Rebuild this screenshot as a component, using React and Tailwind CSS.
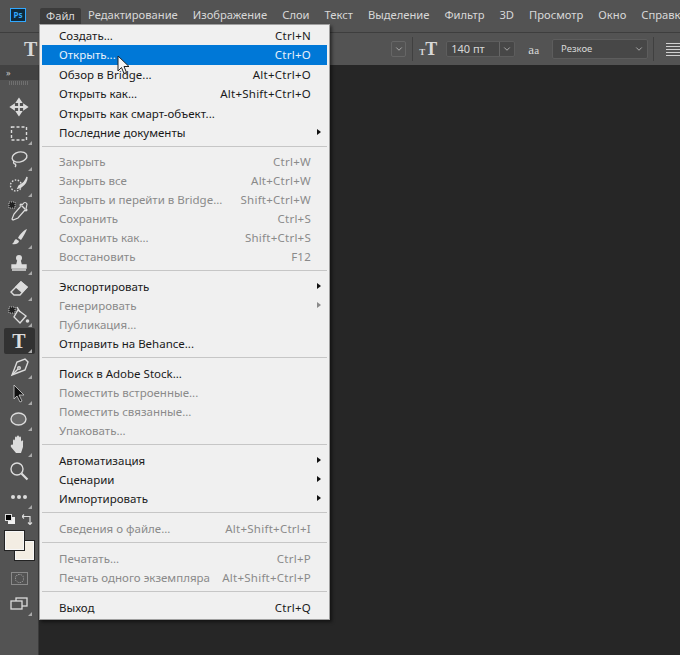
import { ChevronDown } from 'lucide-react'

const font = { fontFamily: '"Noto Sans", sans-serif' }

const topMenu = ['Редактирование', 'Изображение', 'Слои', 'Текст', 'Выделение', 'Фильтр', '3D', 'Просмотр', 'Окно', 'Справка']

// d = disabled, sub = has submenu arrow
const menuGroups = [
  [
    { t: 'Создать...', k: 'Ctrl+N' },
    { t: 'Открыть...', k: 'Ctrl+O', on: true },
    { t: 'Обзор в Bridge...', k: 'Alt+Ctrl+O' },
    { t: 'Открыть как...', k: 'Alt+Shift+Ctrl+O' },
    { t: 'Открыть как смарт-объект...' },
    { t: 'Последние документы', sub: true },
  ],
  [
    { t: 'Закрыть', k: 'Ctrl+W', d: true },
    { t: 'Закрыть все', k: 'Alt+Ctrl+W', d: true },
    { t: 'Закрыть и перейти в Bridge...', k: 'Shift+Ctrl+W', d: true },
    { t: 'Сохранить', k: 'Ctrl+S', d: true },
    { t: 'Сохранить как...', k: 'Shift+Ctrl+S', d: true },
    { t: 'Восстановить', k: 'F12', d: true },
  ],
  [
    { t: 'Экспортировать', sub: true },
    { t: 'Генерировать', sub: true, d: true },
    { t: 'Публикация...', d: true },
    { t: 'Отправить на Behance...' },
  ],
  [
    { t: 'Поиск в Adobe Stock...' },
    { t: 'Поместить встроенные...', d: true },
    { t: 'Поместить связанные...', d: true },
    { t: 'Упаковать...', d: true },
  ],
  [
    { t: 'Автоматизация', sub: true },
    { t: 'Сценарии', sub: true },
    { t: 'Импортировать', sub: true },
  ],
  [{ t: 'Сведения о файле...', k: 'Alt+Shift+Ctrl+I', d: true }],
  [
    { t: 'Печатать...', k: 'Ctrl+P', d: true },
    { t: 'Печать одного экземпляра', k: 'Alt+Shift+Ctrl+P', d: true },
  ],
  [{ t: 'Выход', k: 'Ctrl+Q' }],
]

function MenuRow({ item, tall }) {
  const color = item.on ? 'bg-[#0078d7] text-[#e8f2fb]' : item.d ? 'text-[#8a8a8a]' : 'text-[#1a1a1a]'
  return (
    <div className={`relative flex items-center justify-between ${tall ? 'h-[19.4px]' : 'h-[19px]'} pl-[17px] pr-[16px] text-[11.5px] whitespace-nowrap ${color}`}>
      <span>{item.t}</span>
      {item.k && <span className="tracking-[0.25px]">{item.k}</span>}
      {item.sub && (
        <span className={`absolute right-[6px] top-[6px] w-0 h-0 border-y-[3.5px] border-y-transparent border-l-[4px] ${item.d ? 'border-l-[#8a8a8a]' : 'border-l-[#111]'}`}></span>
      )}
    </div>
  )
}

function FileMenu() {
  return (
    <div className="absolute left-[39px] top-[24px] w-[291px] h-[596px] bg-[#f0f0f0] border border-[#a0a0a0] px-[2px] pt-[1px] shadow-[2px_2px_3px_rgba(0,0,0,0.5)]" style={font}>
      {menuGroups.map((group, i) => (
        <div key={i}>
          {i > 0 && <div className={`h-px bg-[#c6c6c6] mt-[3.7px] ${i === 1 ? 'mb-[5.5px]' : 'mb-[6.2px]'}`}></div>}
          {group.map(item => <MenuRow key={item.t} item={item} tall={i === 0} />)}
        </div>
      ))}
    </div>
  )
}

function Corner() {
  return <span className="absolute right-[3px] bottom-[1px] w-0 h-0 border-l-[4px] border-l-transparent border-b-[4px] border-b-[#aaaaaa]"></span>
}

function Tool({ children, corner = true, active }) {
  return (
    <div className={`relative shrink-0 w-[31px] h-[26px] flex items-center justify-center rounded-[2px] ${active ? 'bg-[#323232]' : ''}`}>
      {children}
      {corner && <Corner />}
    </div>
  )
}

const ic = { width: 22, height: 22, viewBox: '0 0 22 22', fill: 'none', stroke: '#dcdcdc', strokeWidth: 1.4 }

function ToolRail() {
  return (
    <div className="w-[39px] shrink-0 bg-[#535353] border-r border-[#3a3a3a] flex flex-col items-center">
      <div className="w-full h-[15px] bg-[#424242] flex items-center pl-[6px] text-[#c8c8c8] text-[9px] leading-none">»</div>
      <div className="w-[20px] h-[4px] mt-[1px] mb-[9px] bg-[repeating-linear-gradient(90deg,#6f6f6f_0,#6f6f6f_1px,transparent_1px,transparent_2px)]"></div>
      <Tool corner={false}>
        <svg {...ic}><path d="M11 3v16M3 11h16M11 3l-2 3h4zM11 19l-2-3h4zM3 11l3-2v4zM19 11l-3-2v4z" fill="#dcdcdc" strokeWidth="1.8" /></svg>
      </Tool>
      <Tool>
        <svg {...ic}><rect x="3.5" y="5" width="15" height="13" strokeDasharray="3 2" /></svg>
      </Tool>
      <Tool>
        <svg {...ic}><ellipse cx="11.5" cy="9" rx="7.5" ry="5" transform="rotate(-12 11.5 9)" /><path d="M6 13c-1 2 0 3 1 3s1 2 0 3" /></svg>
      </Tool>
      <Tool>
        <svg {...ic}><circle cx="8" cy="11.5" r="5.5" strokeDasharray="1.5 1.5" /><path d="M19 3c-1 4-4 7-8 9l-1 2 3-1c3-2 6-6 6-10z" fill="#dcdcdc" /></svg>
      </Tool>
      <Tool corner={false}>
        <svg {...ic}><rect x="1" y="2" width="6" height="6" fill="#222" strokeWidth="0.8" strokeDasharray="1 1" /><path d="M19 4c-1-2-3-2-4 0l-1 1-1-1-1 1 1 1-7 8-2 5 1 1 5-2 7-8 1 1 1-1-1-1z" strokeWidth="1.2" /><path d="M14 6l3 3" /></svg>
      </Tool>
      <Tool>
        <svg {...ic}><path d="M19 3c-3 1-7 5-9 9l3 2c2-3 5-8 6-11zM8 13c-2 1-2 4-4 5 4 1 7-1 7-3z" fill="#dcdcdc" stroke="none" /></svg>
      </Tool>
      <Tool>
        <svg {...ic}><circle cx="11" cy="6" r="3" fill="#dcdcdc" stroke="none" /><path d="M10 8h2l1 4h-4zM4 13h14v3H4zM4 18h14" fill="#dcdcdc" /></svg>
      </Tool>
      <Tool>
        <svg {...ic}><path d="M13 4l6 5-7 8H6l-3-3z" /><path d="M13 4l6 5-5 5-6-5z" fill="#dcdcdc" /></svg>
      </Tool>
      <Tool>
        <svg {...ic}><rect x="1" y="3" width="6" height="6" fill="#222" strokeWidth="0.8" strokeDasharray="1 1" /><path d="M10 6l8 6-6 7-6-6z" /><path d="M9 3l3 5" /><circle cx="19.5" cy="17" r="1.8" fill="#dcdcdc" stroke="none" /></svg>
      </Tool>
      <Tool active>
        <span className="text-[#dcdcdc] text-[20px] leading-none font-bold" style={{ fontFamily: '"Liberation Serif", serif' }}>T</span>
      </Tool>
      <Tool>
        <svg {...ic}><path d="M17 3l3 3-3 8-8 3-5 2 2-5 3-8z" /><path d="M5 18l5-5" /><circle cx="11" cy="12" r="1.3" /></svg>
      </Tool>
      <Tool>
        <svg {...ic}><path d="M6 3l10 10h-5l3 6-2 1-3-6-3 3z" fill="#111" stroke="#cfcfcf" strokeWidth="0.8" /></svg>
      </Tool>
      <Tool>
        <svg {...ic}><ellipse cx="10.5" cy="11" rx="7.5" ry="6" fill="#6b6b6b" /></svg>
      </Tool>
      <Tool>
        <svg {...ic}><path d="M5 11V7c0-2 2-2 2 0V4c0-2 2-2 2 0V3c0-2 2-2 2 0v1c0-2 2-2 2 0v4c0-2 3-2 2 0v5l-2 6H8l-5-6c-1-2 1-3 2-2z" fill="#dcdcdc" stroke="none" /></svg>
      </Tool>
      <Tool corner={false}>
        <svg {...ic}><circle cx="9" cy="9" r="6" /><path d="M13.5 13.5l6 6" strokeWidth="2.2" /></svg>
      </Tool>
      <Tool>
        <svg {...ic}><circle cx="5" cy="11" r="2" fill="#dcdcdc" stroke="none" /><circle cx="11" cy="11" r="2" fill="#dcdcdc" stroke="none" /><circle cx="17" cy="11" r="2" fill="#dcdcdc" stroke="none" /></svg>
      </Tool>
      <ColorBlock />
      <div className="mt-[12px] shrink-0 w-[17px] h-[13px] border border-[#8a8a8a] flex items-center justify-center">
        <div className="w-[9px] h-[9px] rounded-full border border-dotted border-[#aaaaaa]"></div>
      </div>
      <div className="mt-[6px]">
        <Tool>
          <svg width="18" height="14" viewBox="0 0 18 14" fill="none" stroke="#dcdcdc" strokeWidth="1.3"><rect x="6" y="1" width="11" height="8" /><rect x="1" y="4" width="11" height="8" fill="#535353" /></svg>
        </Tool>
      </div>
    </div>
  )
}

function ColorBlock() {
  return (
    <div className="w-[31px] shrink-0 mt-[1px] flex flex-col">
      <div className="flex items-center justify-between pl-[1px] pr-[2px] h-[16px]">
        <div className="relative w-[10px] h-[10px]">
          <div className="absolute right-0 bottom-0 w-[7px] h-[7px] bg-[#f0f0f0]"></div>
          <div className="absolute left-0 top-0 w-[7px] h-[7px] bg-black border border-[#dddddd]"></div>
        </div>
        <svg width="11" height="11" viewBox="0 0 11 11" fill="none" stroke="#dcdcdc" strokeWidth="1.2"><path d="M0 2.5h8v8M2 .5L0 2.5l2 2M6 8.5l2 2 2-2" /></svg>
      </div>
      <div className="relative h-[29px] mt-[4px]">
        <div className="absolute left-[11px] top-[10px] w-[19px] h-[19px] bg-[#f3ede3] border border-[#f7f7f7] shadow-[0_0_0_1px_#222]"></div>
        <div className="absolute left-[1px] top-0 w-[19px] h-[19px] bg-[#f3ede3] border border-[#f7f7f7] shadow-[0_0_0_1px_#222]"></div>
      </div>
    </div>
  )
}

function OptionsBar() {
  return (
    <div className="h-[33px] bg-[#535353] border-t border-[#3e3e3e] flex items-center text-[#d8d8d8] text-[10px]">
      <span className="ml-[24px] text-[20px] font-bold leading-none" style={{ fontFamily: '"Liberation Serif", serif' }}>T</span>
      <div className="ml-[354px] w-[15px] h-[16px] border border-[#666666] rounded-[2px] flex items-center justify-center">
        <ChevronDown size={10} color="#bdbdbd" />
      </div>
      <div className="ml-[6px] w-px h-[24px] bg-[#404040]"></div>
      <div className="ml-[6px] w-[17px] flex items-baseline" style={{ fontFamily: '"Liberation Serif", serif' }}>
        <span className="text-[9px] leading-none font-bold">T</span>
        <span className="text-[18px] leading-none font-bold">T</span>
      </div>
      <div className="ml-[10px] w-[70px] h-[16px] bg-[#474747] border border-[#5d5d5d] rounded-[2px] flex items-center">
        <span className="pl-[4px] flex-1 text-[11px]">140 пт</span>
        <div className="w-[15px] h-full border-l border-[#666666] flex items-center justify-center">
          <ChevronDown size={10} color="#bdbdbd" />
        </div>
      </div>
      <span className="ml-[13px] text-[13px] leading-none" style={{ fontFamily: '"Liberation Serif", serif' }}>a<span className="text-[11px]">a</span></span>
      <div className="ml-[13px] w-[97px] h-[20px] bg-[#474747] border border-[#5d5d5d] rounded-[2px] flex items-center justify-between pl-[8px] pr-[3px]">
        <span className="text-[9.5px]">Резкое</span>
        <ChevronDown size={10} color="#bdbdbd" />
      </div>
      <div className="ml-[5px] w-px h-[24px] bg-[#404040]"></div>
      <div className="ml-[12px] w-[14px] shrink-0 flex flex-col gap-[2px]">
        <div className="h-px bg-[#d0d0d0]"></div>
        <div className="h-px bg-[#d0d0d0]"></div>
        <div className="h-px bg-[#d0d0d0]"></div>
        <div className="h-px bg-[#d0d0d0]"></div>
        <div className="h-px bg-[#d0d0d0]"></div>
      </div>
    </div>
  )
}

export default function App() {
  return (
    <div className="relative w-[680px] h-[655px] overflow-hidden bg-[#262626] flex flex-col" style={font}>
      {/* MENU BAR */}
      <div className="h-[32px] shrink-0 bg-[#535353] flex items-start pt-[8px] text-[11.2px] text-[#d8d8d8] whitespace-nowrap">
        <div className="shrink-0 ml-[10px] w-[16px] h-[14px] bg-[#0f2a3c] border border-[#31a8ff] text-[#31a8ff] text-[8px] font-bold flex items-center justify-center leading-none">Ps</div>
        <div className="shrink-0 ml-[14px] w-[41px] h-[16px] bg-[#3c3c3c] rounded-t-[2px] flex items-center justify-center">Файл</div>
        <div className="shrink-0 ml-[7px] flex gap-[15px] h-[15px] items-center">
          {topMenu.map(m => <span key={m} className="shrink-0">{m}</span>)}
        </div>
      </div>
      <OptionsBar />
      <div className="flex-1 flex min-h-0">
        <ToolRail />
        <div className="flex-1 bg-[#262626]"></div>
      </div>
      <FileMenu />
      {/* cursor */}
      <svg className="absolute left-[117px] top-[55px]" width="14" height="20" viewBox="0 0 14 20">
        <path d="M1 1v15l3.5-3.5 2.5 6 2.5-1-2.5-6H12z" fill="#f4f4f4" stroke="#222" strokeWidth="1" />
      </svg>
    </div>
  )
}
